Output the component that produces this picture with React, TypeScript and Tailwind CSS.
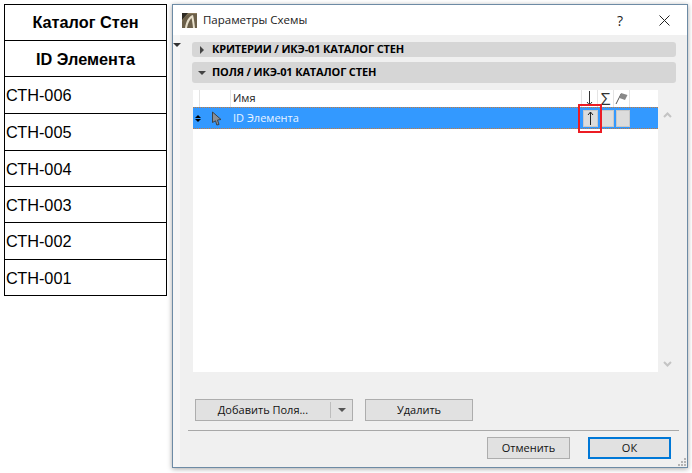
function Row({ children, bold, h, pad }: { children: string; bold?: boolean; h: string; pad?: boolean }) {
  return (
    <div className={`${h} border-b border-black flex items-center ${pad ? "pt-[1px]" : ""} ${bold ? "justify-center font-bold" : "pl-[1px]"}`}>
      {children}
    </div>
  );
}

function Btn({ children, w, primary }: { children: React.ReactNode; w: string; primary?: boolean }) {
  return (
    <div className={`${w} h-[22px] flex items-center justify-center bg-[#e1e1e1] text-[11px] text-[#111] ${primary ? "border-2 border-[#0078d7]" : "border border-[#adadad]"}`}>
      {children}
    </div>
  );
}

function Cursor() {
  return (
    <svg width="11" height="15" viewBox="0 0 11 15">
      <path d="M1.5 1 L10 8.5 L6.5 9 L8 13.5 L5.8 14 L4.5 9.8 L1.5 11.5 Z" fill="#8a8f96" stroke="#3c4248" strokeWidth="1" />
    </svg>
  );
}

export default function App() {
  return (
    <div className="w-[692px] h-[473px] bg-white flex items-start overflow-hidden [font-family:'Open_Sans','Noto_Sans',sans-serif]">
      <div className="ml-1 mt-1 w-[163px] border border-b-0 border-black text-[16.3px] text-black [font-family:'Liberation_Sans',sans-serif] shrink-0">
        <Row bold h="h-[36px]">Каталог Стен</Row>
        <Row bold pad h="h-[36px]">ID Элемента</Row>
        <Row pad h="h-[37px]">СТН-006</Row>
        <Row pad h="h-[37px]">СТН-005</Row>
        <Row pad h="h-[36px]">СТН-004</Row>
        <Row pad h="h-[36px]">СТН-003</Row>
        <Row pad h="h-[37px]">СТН-002</Row>
        <Row pad h="h-[36px]">СТН-001</Row>
      </div>

      <div className="ml-[5px] mt-1 w-[516px] h-[464px] shrink-0 border border-[#6d8ba5] bg-[#f0f0f0] flex flex-col shadow-[0_1px_5px_rgba(0,0,0,0.35)] relative">
        <div className="h-[30px] bg-white flex items-center shrink-0">
          <svg className="ml-[9px]" width="15" height="15" viewBox="0 0 15 15">
            <rect width="15" height="15" fill="#8a7a5e" />
            <path d="M0 15 L0 9 C2 4 5 1 9 1 L15 1 L15 15 Z" fill="#6b5f49" />
            <path d="M3 15 C4 8 7 3 11 2 C12 6 12.5 10 13 15 L11 15 C10.5 10 10 7 9.5 5 C7.5 7 6 10 5 15 Z" fill="#e8e0cc" />
            <path d="M0 0 H6 L0 7 Z" fill="#2e2a22" />
          </svg>
          <span className="ml-[6px] text-[11.5px] text-[#222]">Параметры Схемы</span>
          <span className="ml-auto mr-[36px] text-[14px] text-[#222]">?</span>
          <svg className="mr-[17px]" width="11" height="11" viewBox="0 0 11 11">
            <path d="M0.5 0.5 L10.5 10.5 M10.5 0.5 L0.5 10.5" stroke="#222" strokeWidth="1" />
          </svg>
        </div>

        <div className="flex-1 flex min-h-0">
          <div className="w-[7px] bg-[#f6f6f6] shrink-0" />
          <div className="flex-1 flex flex-col min-w-0 relative">
            <div className="absolute left-[-7px] top-[8px] w-0 h-0 border-x-[4px] border-x-transparent border-t-[4px] border-t-[#333]" />

            <div className="ml-[12px] mr-[11px] mt-[7px] h-[15px] rounded-[3px] bg-[#d6d6d6] flex items-center text-[11px] font-bold tracking-[-0.16px] text-black">
              <div className="ml-[8px] w-0 h-0 border-y-[4px] border-y-transparent border-l-[4px] border-l-[#444]" />
              <span className="ml-[8px]">КРИТЕРИИ / ИКЭ-01 КАТАЛОГ СТЕН</span>
            </div>
            <div className="ml-[12px] mr-[11px] mt-[5px] h-[21px] rounded-[3px] bg-[#d6d6d6] flex items-center text-[11px] font-bold tracking-[-0.16px] text-black">
              <div className="ml-[6px] w-0 h-0 border-x-[4px] border-x-transparent border-t-[4px] border-t-[#444]" />
              <span className="ml-[6px]">ПОЛЯ / ИКЭ-01 КАТАЛОГ СТЕН</span>
            </div>

            <div className="flex mt-[7px] h-[282px]">
              <div className="ml-[13px] w-[465px] bg-white flex flex-col">
                <div className="h-[17px] flex items-stretch text-[11px] text-[#222] shrink-0">
                  <div className="w-[7px] border-r border-[#e4e4e4]" />
                  <div className="w-[31px] border-r border-[#e4e4e4]" />
                  <div className="w-[351px] pl-[2px] border-r border-[#e4e4e4] flex items-center">Имя</div>
                  <div className="w-[16px] border-r border-[#e4e4e4] flex justify-center items-start pt-[1px]">
                    <svg width="9" height="15" viewBox="0 0 9 15"><path d="M4.5 0 V14 M2 11 L4.5 14 L7 11" fill="none" stroke="#333" /></svg>
                  </div>
                  <div className="w-[16px] border-r border-[#e4e4e4] flex justify-center items-center text-[17px] leading-none text-[#333]">Σ</div>
                  <div className="w-[16px] border-r border-[#e4e4e4] flex justify-center items-center">
                    <svg width="13" height="13" viewBox="0 0 13 13"><path d="M1 12 L6 2" stroke="#555" /><path d="M6 1 L12.5 3 L10 8 L4.5 6 Z" fill="#888" /></svg>
                  </div>
                </div>
                <div className="h-[22px] bg-[#3399ff] border-y border-dotted border-[#c57a3c] flex items-center shrink-0 relative">
                  <div className="w-[8px] ml-[1px] flex flex-col items-center gap-[1px]">
                    <div className="w-0 h-0 border-x-[3px] border-x-transparent border-b-[3px] border-b-black" />
                    <div className="w-0 h-0 border-x-[3px] border-x-transparent border-t-[3px] border-t-black" />
                  </div>
                  <div className="ml-[9px] flex"><Cursor /></div>
                  <span className="ml-[11px] text-[11px] text-[#e8f3ff]">ID Элемента</span>
                  <div className="ml-auto mr-[28px] flex gap-[2px]">
                    <div className="w-[15px] h-[17px] bg-[#dcdcdc] border border-[#c8c8c8] flex items-center justify-center">
                      <svg width="9" height="14" viewBox="0 0 9 14"><path d="M4.5 14 V1 M2 4 L4.5 1 L7 4" fill="none" stroke="#222" /></svg>
                    </div>
                    <div className="w-[14px] h-[17px] bg-[#dcdcdc] border border-[#c8c8c8]" />
                    <div className="w-[14px] h-[17px] bg-[#dcdcdc] border border-[#c8c8c8]" />
                  </div>
                  <div className="absolute left-[385px] top-[-4px] w-[24px] h-[29px] border-2 border-[#ec1c24]" />
                </div>
              </div>
              <div className="w-[18px] flex flex-col items-center justify-between pt-[22px] pb-[5px]">
                <svg width="9" height="6" viewBox="0 0 9 6"><path d="M1 5 L4.5 1.5 L8 5" fill="none" stroke="#c4c4c4" strokeWidth="2" /></svg>
                <svg width="9" height="6" viewBox="0 0 9 6"><path d="M1 1 L4.5 4.5 L8 1" fill="none" stroke="#c4c4c4" strokeWidth="2" /></svg>
              </div>
            </div>

            <div className="flex items-start mt-[27px] ml-[15px]">
              <div className="w-[158px] h-[22px] flex items-center bg-[#e1e1e1] border border-[#adadad] text-[11px] text-[#111]">
                <span className="w-[134px] text-center">Добавить Поля...</span>
                <div className="w-px h-[16px] bg-[#bdbdbd]" />
                <div className="ml-[7px] w-0 h-0 border-x-[4px] border-x-transparent border-t-[4px] border-t-[#555]" />
              </div>
              <div className="ml-[12px]"><Btn w="w-[108px]">Удалить</Btn></div>
            </div>

            <div className="ml-[8px] mr-[8px] mt-[9px] h-px bg-[#a8a8a8]" />

            <div className="flex justify-end mt-[6px] mr-[16px] gap-[18px]">
              <Btn w="w-[83px]">Отменить</Btn>
              <Btn w="w-[83px]" primary>ОК</Btn>
            </div>

            <svg className="absolute right-[1px] bottom-[1px]" width="8" height="8" viewBox="0 0 8 8" fill="#b4b4b4">
              <rect x="6" y="0" width="2" height="2" /><rect x="3" y="3" width="2" height="2" /><rect x="6" y="3" width="2" height="2" />
              <rect x="0" y="6" width="2" height="2" /><rect x="3" y="6" width="2" height="2" /><rect x="6" y="6" width="2" height="2" />
            </svg>
          </div>
        </div>
      </div>
    </div>
  );
}
